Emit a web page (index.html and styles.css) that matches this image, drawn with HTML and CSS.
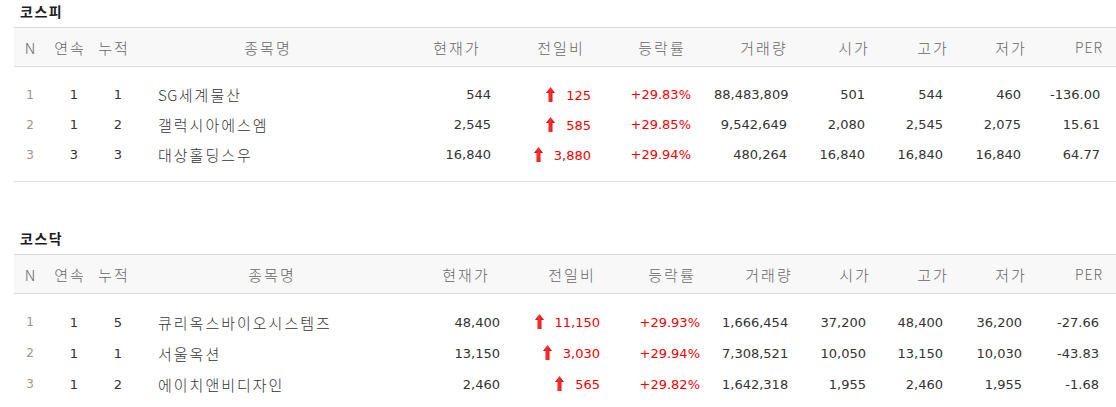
FILE: index.html
```html
<!DOCTYPE html>
<html lang="ko">
<head>
<meta charset="utf-8">
<title>상한가</title>
<link rel="stylesheet" href="styles.css">
</head>
<body>
<svg width="0" height="0" class="defs" aria-hidden="true">
  <defs>
    <linearGradient id="upGrad" x1="0" y1="0" x2="1" y2="0">
      <stop offset="0" stop-color="#c40000"/>
      <stop offset="0.45" stop-color="#ff3030"/>
      <stop offset="1" stop-color="#c80000"/>
    </linearGradient>
    <symbol id="up" viewBox="0 0 9 15">
      <path d="M4.5 0 L9 6 L6.5 6 L6.5 15 L2.5 15 L2.5 6 L0 6 Z" fill="url(#upGrad)"/>
    </symbol>
  </defs>
</svg>

<div class="page">
  <section class="market">
    <h3 class="market-title">코스피</h3>
    <table class="sise t-kospi">
      <colgroup>
        <col class="c-n"><col class="c-cont"><col class="c-acc"><col class="c-name">
        <col class="c-price"><col class="c-diff"><col class="c-rate"><col class="c-vol">
        <col class="c-open"><col class="c-high"><col class="c-low"><col class="c-per">
      </colgroup>
      <thead>
        <tr>
          <th>N</th><th>연속</th><th>누적</th><th>종목명</th><th>현재가</th><th>전일비</th>
          <th>등락률</th><th>거래량</th><th>시가</th><th>고가</th><th>저가</th><th class="per">PER</th>
        </tr>
      </thead>
      <tbody>
        <tr class="gap top"><td colspan="12"></td></tr>
        <tr>
          <td class="no">1</td><td class="cnt">1</td><td class="cnt">1</td><td class="name"><span class="latin">SG</span>세계물산</td>
          <td class="num">544</td>
          <td class="num up"><svg class="arrow"><use href="#up"/></svg>125</td>
          <td class="num up">+29.83%</td>
          <td class="num">88,483,809</td><td class="num">501</td><td class="num">544</td><td class="num">460</td><td class="num">-136.00</td>
        </tr>
        <tr>
          <td class="no">2</td><td class="cnt">1</td><td class="cnt">2</td><td class="name">갤럭시아에스엠</td>
          <td class="num">2,545</td>
          <td class="num up"><svg class="arrow"><use href="#up"/></svg>585</td>
          <td class="num up">+29.85%</td>
          <td class="num">9,542,649</td><td class="num">2,080</td><td class="num">2,545</td><td class="num">2,075</td><td class="num">15.61</td>
        </tr>
        <tr>
          <td class="no">3</td><td class="cnt">3</td><td class="cnt">3</td><td class="name">대상홀딩스우</td>
          <td class="num">16,840</td>
          <td class="num up"><svg class="arrow"><use href="#up"/></svg>3,880</td>
          <td class="num up">+29.94%</td>
          <td class="num">480,264</td><td class="num">16,840</td><td class="num">16,840</td><td class="num">16,840</td><td class="num">64.77</td>
        </tr>
        <tr class="gap bottom"><td colspan="12"></td></tr>
      </tbody>
    </table>
  </section>

  <section class="market second">
    <h3 class="market-title">코스닥</h3>
    <table class="sise t-kosdaq">
      <colgroup>
        <col class="c-n"><col class="c-cont"><col class="c-acc"><col class="c-name">
        <col class="c-price"><col class="c-diff"><col class="c-rate"><col class="c-vol">
        <col class="c-open"><col class="c-high"><col class="c-low"><col class="c-per">
      </colgroup>
      <thead>
        <tr>
          <th>N</th><th>연속</th><th>누적</th><th>종목명</th><th>현재가</th><th>전일비</th>
          <th>등락률</th><th>거래량</th><th>시가</th><th>고가</th><th>저가</th><th class="per">PER</th>
        </tr>
      </thead>
      <tbody>
        <tr class="gap top"><td colspan="12"></td></tr>
        <tr>
          <td class="no">1</td><td class="cnt">1</td><td class="cnt">5</td><td class="name">큐리옥스바이오시스템즈</td>
          <td class="num">48,400</td>
          <td class="num up"><svg class="arrow"><use href="#up"/></svg>11,150</td>
          <td class="num up">+29.93%</td>
          <td class="num">1,666,454</td><td class="num">37,200</td><td class="num">48,400</td><td class="num">36,200</td><td class="num">-27.66</td>
        </tr>
        <tr>
          <td class="no">2</td><td class="cnt">1</td><td class="cnt">1</td><td class="name">서울옥션</td>
          <td class="num">13,150</td>
          <td class="num up"><svg class="arrow"><use href="#up"/></svg>3,030</td>
          <td class="num up">+29.94%</td>
          <td class="num">7,308,521</td><td class="num">10,050</td><td class="num">13,150</td><td class="num">10,030</td><td class="num">-43.83</td>
        </tr>
        <tr>
          <td class="no">3</td><td class="cnt">1</td><td class="cnt">2</td><td class="name">에이치앤비디자인</td>
          <td class="num">2,460</td>
          <td class="num up"><svg class="arrow"><use href="#up"/></svg>565</td>
          <td class="num up">+29.82%</td>
          <td class="num">1,642,318</td><td class="num">1,955</td><td class="num">2,460</td><td class="num">1,955</td><td class="num">-1.68</td>
        </tr>
        <tr class="gap bottom"><td colspan="12"></td></tr>
      </tbody>
    </table>
  </section>
</div>
</body>
</html>
```

FILE: styles.css
```css
html, body {
  margin: 0;
  padding: 0;
  background: #fff;
  overflow: hidden;
}

body {
  font-family: "Noto Sans CJK KR", "Noto Sans", sans-serif;
  color: #333;
}

.defs {
  position: absolute;
  width: 0;
  height: 0;
}

.page {
  padding-left: 14px;
}

.market.second {
  margin-top: 45px;
}

.market-title {
  margin: 0;
  height: 27px;
  padding-left: 6px;
  font-size: 14px;
  font-weight: bold;
  line-height: 23px;
  letter-spacing: 1.5px;
  color: #1c1c1c;
}

.sise {
  width: 1102px;
  table-layout: fixed;
  border-collapse: collapse;
  border-spacing: 0;
}

.sise thead th {
  height: 38px;
  padding: 0;
  background: #f8f8f8;
  border-top: 1px solid #d9d9d9;
  border-bottom: 1px solid #d9d9d9;
  font-size: 15px;
  font-weight: 300;
  letter-spacing: 2px;
  text-indent: 2px;
  color: #666;
  text-align: center;
  white-space: nowrap;
}

.sise thead th.per {
  text-align: right;
  padding-right: 13px;
  font-size: 14px;
  letter-spacing: 1px;
}

.sise tbody td {
  padding: 0;
  white-space: nowrap;
}

.sise tbody tr {
  height: 30px;
}

.t-kosdaq tbody tr {
  height: 31px;
}

.sise tbody tr.gap.top {
  height: 13px;
}

.sise tbody tr.gap.bottom {
  height: 12px;
}

.sise tbody tr.gap.bottom td {
  border-bottom: 1px solid #e0e0e0;
}

.sise td.no {
  text-align: center;
  font-family: "DejaVu Sans", sans-serif;
  font-size: 12px;
  color: #9e958c;
}

.sise td.cnt {
  text-align: center;
  padding-left: 10px;
  font-family: "DejaVu Sans", sans-serif;
  font-size: 13px;
  color: #333;
}

.sise td.name {
  padding-left: 24px;
  font-size: 15px;
  font-weight: 300;
  letter-spacing: 2px;
  color: #333;
}

.sise td.name .latin {
  letter-spacing: 0.5px;
  margin-right: 1px;
}

.sise td.num {
  text-align: right;
  font-family: "DejaVu Sans", sans-serif;
  font-size: 13px;
  color: #333;
}

.sise td.up {
  color: #f00000;
}

.arrow {
  display: inline-block;
  width: 9px;
  height: 15px;
  margin-right: 11px;
  vertical-align: -2px;
}

/* column widths: KOSPI */
.t-kospi .c-n { width: 32px; }
.t-kospi .c-cont { width: 46px; }
.t-kospi .c-acc { width: 42px; }
.t-kospi .c-name { width: 266px; }
.t-kospi .c-price { width: 112px; }
.t-kospi .c-diff { width: 96px; }
.t-kospi .c-rate { width: 106px; }
.t-kospi .c-vol { width: 98px; }
.t-kospi .c-open { width: 82px; }
.t-kospi .c-high { width: 76px; }
.t-kospi .c-low { width: 80px; }
.t-kospi .c-per { width: 66px; }

.t-kospi td:nth-child(5) { padding-right: 21px; }
.t-kospi td:nth-child(6) { padding-right: 17px; }
.t-kospi td:nth-child(7) { padding-right: 23px; }
.t-kospi td:nth-child(8) { padding-right: 25px; }
.t-kospi td:nth-child(9) { padding-right: 29px; }
.t-kospi td:nth-child(10) { padding-right: 27px; }
.t-kospi td:nth-child(11) { padding-right: 29px; }
.t-kospi td:nth-child(12) { padding-right: 16px; }

/* column widths: KOSDAQ */
.t-kosdaq .c-n { width: 32px; }
.t-kosdaq .c-cont { width: 46px; }
.t-kosdaq .c-acc { width: 42px; }
.t-kosdaq .c-name { width: 274px; }
.t-kosdaq .c-price { width: 114px; }
.t-kosdaq .c-diff { width: 98px; }
.t-kosdaq .c-rate { width: 102px; }
.t-kosdaq .c-vol { width: 92px; }
.t-kosdaq .c-open { width: 80px; }
.t-kosdaq .c-high { width: 76px; }
.t-kosdaq .c-low { width: 80px; }
.t-kosdaq .c-per { width: 66px; }

.t-kosdaq td:nth-child(5) { padding-right: 22px; }
.t-kosdaq td:nth-child(6) { padding-right: 20px; }
.t-kosdaq td:nth-child(7) { padding-right: 22px; }
.t-kosdaq td:nth-child(8) { padding-right: 26px; }
.t-kosdaq td:nth-child(9) { padding-right: 28px; }
.t-kosdaq td:nth-child(10) { padding-right: 27px; }
.t-kosdaq td:nth-child(11) { padding-right: 28px; }
.t-kosdaq td:nth-child(12) { padding-right: 17px; }
```
